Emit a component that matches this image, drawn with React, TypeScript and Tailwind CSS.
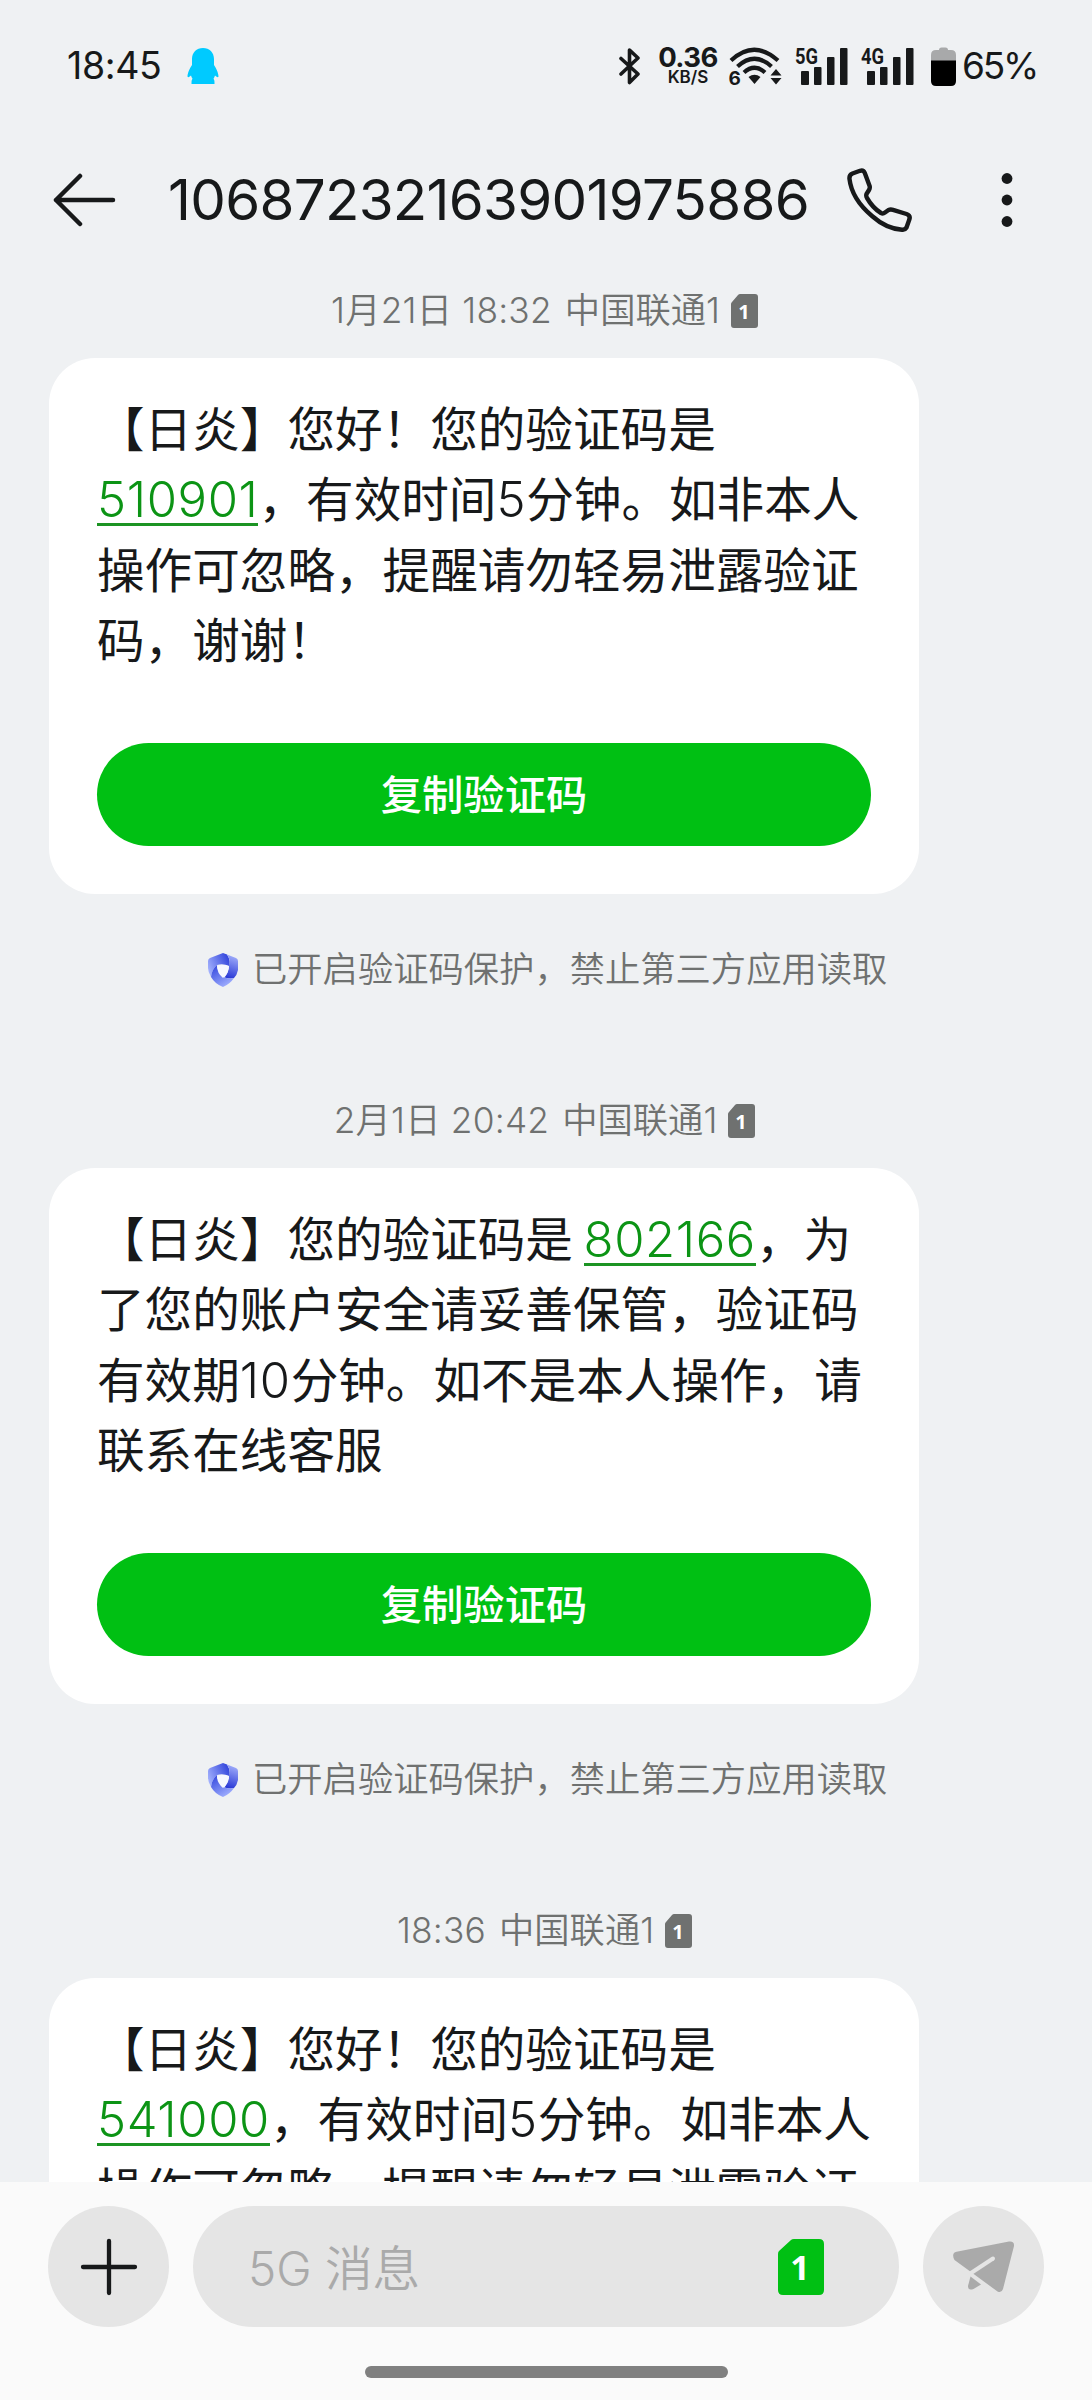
import type { ReactNode } from "react";

type Message = {
  id: number;
  date: string;
  lines: ReactNode[];
};

function Num({ children }: { children: ReactNode }) {
  return (
    <span className="font-['Inter',sans-serif] text-[49px] font-light tracking-[0.013em]">
      {children}
    </span>
  );
}

function Code({ children }: { children: string }) {
  return (
    <a className="inline-block h-[50px] border-b-[3px] border-[#1c9423] align-baseline font-['Inter',sans-serif] text-[49px] leading-[47px] font-light tracking-[0.013em] text-[#0c9415]">
      {children}
    </a>
  );
}

const messages: Message[] = [
  {
    id: 1,
    date: "1月21日 18:32",
    lines: [
      "【日炎】您好！您的验证码是",
      <>
        <Code>510901</Code>，有效时间<Num>5</Num>分钟。如非本人
      </>,
      "操作可忽略，提醒请勿轻易泄露验证",
      "码，谢谢！",
    ],
  },
  {
    id: 2,
    date: "2月1日 20:42",
    lines: [
      <>
        【日炎】您的验证码是 <Code>802166</Code>，为
      </>,
      "了您的账户安全请妥善保管，验证码",
      <>
        有效期<Num>10</Num>分钟。如不是本人操作，请
      </>,
      "联系在线客服",
    ],
  },
  {
    id: 3,
    date: "18:36",
    lines: [
      "【日炎】您好！您的验证码是",
      <>
        <Code>541000</Code>，有效时间<Num>5</Num>分钟。如非本人
      </>,
      "操作可忽略，提醒请勿轻易泄露验证",
    ],
  },
];

function Signal({ label }: { label: string }) {
  return (
    <svg viewBox="0 0 53 40" className="h-[40px] w-[53px] overflow-visible" fill="#17191a">
      <text x="0" y="17.500" fontFamily="Roboto" fontWeight="700" fontSize="22" textLength="23" lengthAdjust="spacingAndGlyphs">
        {label}
      </text>
      <rect x="6" y="25" width="8" height="14" rx="1" />
      <rect x="19" y="21" width="7.5" height="18" rx="1" />
      <rect x="32" y="11" width="7.5" height="28" rx="1" />
      <rect x="45" y="2" width="7.5" height="37" rx="1" />
    </svg>
  );
}

function StatusBar() {
  return (
    <div className="flex h-[132px] shrink-0 items-center pr-[55px] pl-[67px]">
      <span className="w-[120px] text-[37.500px] tracking-[-0.01em]">18:45</span>
      <svg viewBox="0 0 32 36" className="h-[36px] w-[32px]" fill="#00caff">
        <path d="M16 0C9.500 0 5 4.500 5 11v6C3 20 .500 25 .500 28.500c.500 1.500 2.500 0 3.500-1 .400 1.300 .800 2.300 1.500 3.200C4.500 32 4.500 33 4.500 36h23c0-3 0-4-1-5.300 .700-.900 1.100-1.900 1.500-3.200 1 1 3 2.500 3.500 1C31.500 25 29 20 27 17v-6C27 4.500 22.500 0 16 0z" />
      </svg>

      <div className="ml-auto flex items-center">
        <svg viewBox="0 0 22 38" className="mr-[17px] h-[38px] w-[22px]" fill="none" stroke="#17191a" strokeWidth="3.600" strokeLinejoin="round" strokeLinecap="round">
          <path d="M2 11.500 19 27 10.500 35.500V3L19 11 2 27" />
        </svg>
        <div className="mr-[11px] flex h-[40px] w-[60px] flex-col items-center">
          <span className="text-[27.500px] leading-[23px] font-bold tracking-[-0.02em]">0.36</span>
          <span className="text-[17px] leading-[17px] font-semibold">KB/S</span>
        </div>
        <svg viewBox="0 0 53 40" className="mr-[13px] h-[40px] w-[53px] overflow-visible" fill="none" stroke="#17191a" strokeWidth="4.200">
          <path d="M2 14.500q23-21.500 47 0" />
          <path d="M8.500 20.500q17-15.500 34 0" />
          <path d="M15 26.500q10.500-9.500 21 0" />
          <path d="M25.500 38 19.500 31q6-4.500 12 0z" fill="#17191a" stroke="none" />
          <path d="m47 23 5.500 6.500h-11zM47 38.500l-5.500-6.500h11z" fill="#17191a" stroke="none" />
          <text x="-.500" y="39" fill="#17191a" stroke="none" fontFamily="Inter" fontWeight="700" fontSize="19">
            6
          </text>
        </svg>
        <div className="mr-[13px]">
          <Signal label="5G" />
        </div>
        <div className="mr-[17px]">
          <Signal label="4G" />
        </div>
        <svg viewBox="0 0 25 39" className="mr-[6px] h-[39px] w-[25px]">
          <path d="M8 3q0-2.500 2.500-2.500h4Q17 .500 17 3h3q5 0 5 5v6H0V8q0-5 5-5z" fill="#a8a9aa" />
          <path d="M0 13.500h25V34q0 5-5 5H5q-5 0-5-5z" fill="#000" />
        </svg>
        <span className="w-[75px] text-[37px] tracking-[-0.06em]">65%</span>
      </div>
    </div>
  );
}

function Header() {
  return (
    <header className="flex h-[136px] shrink-0 items-center pl-[53px]">
      <svg viewBox="0 0 63 54" className="h-[54px] w-[63px]" fill="none" stroke="#17191a" strokeWidth="4.500" strokeLinecap="round" strokeLinejoin="round">
        <path d="M60 27H3M27 3 3 27l24 24" />
      </svg>
      <h1 className="ml-[52px] w-[679px] text-[56.500px] leading-none font-normal whitespace-nowrap tracking-[-0.013em]">
        10687232163901975886
      </h1>
      <svg viewBox="0 0 65 64" className="h-[64px] w-[65px]" fill="none" stroke="#17191a" strokeWidth="4.400" strokeLinejoin="round">
        <path d="M2.500 11Q2 7 5.500 5.500L13 2.800Q16.500 1.800 17.800 5L22.600 18Q23.200 20 22 22L19.500 26Q18.800 28 20 30C24 37 29 42 34 45Q36 46 38 44.500L41.500 42Q43.500 41 46 41.800L59.500 46Q63.500 47.500 62.500 51L59.500 59.500Q58 62 55 61.800C45 61 34 56 25 48C12 37 4 24 2.500 11Z" />
      </svg>
      <svg viewBox="0 0 12 56" className="ml-[89px] h-[56px] w-[12px]" fill="#17191a">
        <circle cx="6" cy="6.500" r="5.400" />
        <circle cx="6" cy="28" r="5.400" />
        <circle cx="6" cy="49.500" r="5.400" />
      </svg>
    </header>
  );
}

function SimBadge() {
  return (
    <svg viewBox="0 0 27 34" className="ml-[11px] h-[34px] w-[27px]">
      <path d="M9 0h15q3 0 3 3v28q0 3-3 3H3q-3 0-3-3V10q0-1 1-2L7 1q1-1 2-1z" fill="#6f7170" />
      <text x="13" y="25" textAnchor="middle" fill="#fff" fontFamily="Open Sans" fontWeight="700" fontSize="20">
        1
      </text>
    </svg>
  );
}

function ShieldIcon() {
  return (
    <svg viewBox="0 0 30 34" className="h-[34px] w-[30px]">
      <defs>
        <linearGradient id="petalTop" x1="0" y1=".8" x2="1" y2=".3">
          <stop offset="0" stopColor="#a9b7ff" />
          <stop offset="1" stopColor="#3346dc" />
        </linearGradient>
        <linearGradient id="petalRight" x1=".6" y1="0" x2=".4" y2="1">
          <stop offset="0" stopColor="#a3b0fb" />
          <stop offset="1" stopColor="#2a39d6" />
        </linearGradient>
        <linearGradient id="petalLeft" x1=".7" y1="1" x2=".1" y2=".1">
          <stop offset="0" stopColor="#a3b2ff" />
          <stop offset="1" stopColor="#3a4de0" />
        </linearGradient>
      </defs>
      <path d="M0 8Q0 6 2 5L15 0L19 1.500Q23 8 21 13Q15 10 9 12Q4 16 3 24Q0 19 0 15Z" fill="url(#petalTop)" />
      <path d="M19 1.500L28 5Q30 6 30 8V17Q29 22 26 25Q22 26 16.500 24.500Q21 19 21 12Q23 7 19 1.500Z" fill="url(#petalRight)" />
      <path d="M3 24Q4 16 9 12Q9 19 16.500 24.500Q22 26 26 25Q22 31 15 34Q7 31 3 24Z" fill="url(#petalLeft)" />
      <path d="M9 13Q15 11 21 13Q21 20 15 25Q9 20 9 13Z" fill="#f6f8ff" />
    </svg>
  );
}

function MessageItem({ message }: { message: Message }) {
  return (
    <section className="h-[810px] shrink-0">
      <div className="flex h-[90px] items-center justify-center pr-[3px] pb-[4px] text-[35.300px] font-[350] text-[#6f7170]">
        <span className="tracking-[0.006em] whitespace-pre">{message.date}</span>
        <span className="ml-[13px]">中国联通1</span>
        <SimBadge />
      </div>
      <article className="ml-[49px] h-[536px] w-[870px] rounded-[46px] bg-white px-[48px] pt-[34px]">
        <div className="h-[281px] text-[47.600px] leading-[70.300px] font-normal [text-spacing-trim:space-all] [font-family:'Noto_Sans_CJK_SC',sans-serif]">
          {message.lines.map((line, i) => (
            <p key={i} className="h-[70.300px] whitespace-nowrap">
              {line}
            </p>
          ))}
        </div>
        <button className="mt-[70px] flex h-[103px] w-full items-center justify-center rounded-full bg-[#00c013] pt-[3px] text-[41.300px] font-medium text-white">
          复制验证码
        </button>
      </article>
      <div className="mt-[53px] flex items-center pl-[208px] text-[35.300px] leading-[46px] font-[350] text-[#6f7170]">
        <ShieldIcon />
        <span className="ml-[14px] [text-spacing-trim:space-all]">已开启验证码保护，禁止第三方应用读取</span>
      </div>
    </section>
  );
}

function Composer() {
  return (
    <footer className="h-[218px] shrink-0 bg-[#fafafa] pt-[24px]">
      <div className="flex gap-[24px] pl-[48px]">
        <button className="flex size-[121px] items-center justify-center rounded-full bg-[#e5e5e5]">
          <svg viewBox="0 0 58 58" className="size-[58px]" stroke="#17191a" strokeWidth="4.300" strokeLinecap="round">
            <path d="M29 3v52M3 29h52" />
          </svg>
        </button>
        <div className="flex h-[121px] w-[706px] items-center rounded-full bg-[#e5e5e5] pr-[75px] pl-[55px]">
          <span className="pt-[4px] text-[47.600px] font-[350] text-[#aaaaaa]">5G 消息</span>
          <svg viewBox="0 0 46 56" className="ml-auto h-[56px] w-[46px]">
            <path d="M16 0h25q5 0 5 5v46q0 5-5 5H5q-5 0-5-5V15q0-2 1-3L13 1q1-1 3-1z" fill="#00c013" />
            <text x="22" y="41" textAnchor="middle" fill="#fff" fontFamily="Open Sans" fontWeight="700" fontSize="34">
              1
            </text>
          </svg>
        </div>
        <button className="flex size-[121px] items-center justify-center rounded-full bg-[#e5e5e5]">
          <svg viewBox="0 0 62 52" className="h-[52px] w-[62px]" fill="#aaaaaa">
            <path d="M3.500 10.700L56 .6Q61.500 0 61 5L50 48Q48.500 52.500 44.500 50.500L20 32.500L1.500 19Q-2 12 3.500 10.700Z" />
            <path d="M17.500 35.500L28 43.500L20.500 48Q15 50 15 45Z" />
            <path d="M18 32 40 17.500" stroke="#e5e5e5" strokeWidth="4" strokeLinecap="round" />
          </svg>
        </button>
      </div>
      <div className="mx-auto mt-[39px] h-[12px] w-[363px] rounded-full bg-[#808080]" />
    </footer>
  );
}

export default function App() {
  return (
    <main className="flex h-[2400px] w-[1092px] flex-col overflow-hidden bg-[#eff1f3] font-['Inter','Noto_Sans_CJK_SC',sans-serif] text-[#17191a]">
      <StatusBar />
      <Header />
      <div className="flex min-h-0 flex-1 flex-col overflow-hidden">
        {messages.map(m => (
          <MessageItem key={m.id} message={m} />
        ))}
      </div>
      <Composer />
    </main>
  );
}
